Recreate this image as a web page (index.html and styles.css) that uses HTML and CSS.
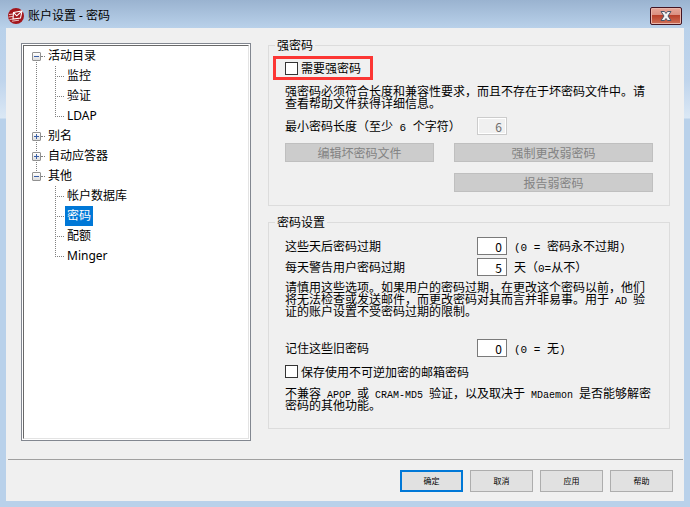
FILE: index.html
```html
<!DOCTYPE html>
<html lang="zh-CN">
<head>
    <meta charset="UTF-8">
    <meta name="viewport" content="width=device-width, initial-scale=1.0">
    <title>账户设置 - 密码</title>
    <link rel="stylesheet" href="styles.css">
</head>
<body>
    <header class="title-bar">
        <svg class="app-icon" width="16" height="16" viewBox="0 0 16 16">
            <circle cx="8" cy="8" r="8" fill="#a3161c"/>
            <path d="M5.5 4.5L14 3L12.5 10L5 11Z" fill="#a3161c" stroke="#fff" stroke-width="1.1"/>
            <path d="M5.5 4.5L8.8 7.8L14 3" fill="none" stroke="#fff" stroke-width="1.1"/>
            <path d="M1 6.5L5 6M0.5 9L5 8.4M1.5 11.5L5 11M4 13.2L11 12.2" fill="none" stroke="#f3d3d3" stroke-width="0.9"/>
        </svg>
        <h1 class="title">账户设置 - 密码</h1>
        <button class="close-btn" type="button" aria-label="关闭">
            <svg width="12" height="10" viewBox="0 0 12 10">
                <path d="M1 0.5H4.5L6 2.5L7.5 0.5H11L8 5L11 9.5H7.5L6 7.5L4.5 9.5H1L4 5Z" fill="#f4f4f4" stroke="#4b5568"/>
            </svg>
        </button>
    </header>

    <form class="window">
        <div class="main">
            <nav class="tree">
                <ul class="tree-list">
                    <li class="node">
                        <div class="row"><button class="toggle" type="button" aria-label="折叠"></button><a href="#">活动目录</a></div>
                        <ul class="children">
                            <li class="leaf"><a href="#">监控</a></li>
                            <li class="leaf"><a href="#">验证</a></li>
                            <li class="leaf"><a href="#">LDAP</a></li>
                        </ul>
                    </li>
                    <li class="node">
                        <div class="row"><button class="toggle closed" type="button" aria-label="展开"></button><a href="#">别名</a></div>
                    </li>
                    <li class="node">
                        <div class="row"><button class="toggle closed" type="button" aria-label="展开"></button><a href="#">自动应答器</a></div>
                    </li>
                    <li class="node">
                        <div class="row"><button class="toggle" type="button" aria-label="折叠"></button><a href="#">其他</a></div>
                        <ul class="children">
                            <li class="leaf"><a href="#">帐户数据库</a></li>
                            <li class="leaf"><a href="#" class="selected">密码</a></li>
                            <li class="leaf"><a href="#">配额</a></li>
                            <li class="leaf"><a href="#">Minger</a></li>
                        </ul>
                    </li>
                </ul>
            </nav>

            <div class="panel">
                <fieldset class="group">
                    <legend>强密码</legend>
                    <div class="group-body">
                        <label class="check highlight"><input type="checkbox">需要强密码</label>
                        <p class="note">强密码必须符合长度和兼容性要求，而且不存在于坏密码文件中。请查看帮助文件获得详细信息。</p>
                        <div class="field min-length">
                            <label for="min-length">最小密码长度（至少<span class="latin"> 6 </span>个字符）</label>
                            <input type="text" id="min-length" value="6" disabled>
                        </div>
                        <div class="actions">
                            <button type="button" disabled>编辑坏密码文件</button>
                            <button type="button" disabled>强制更改弱密码</button>
                            <button type="button" class="report" disabled>报告弱密码</button>
                        </div>
                    </div>
                </fieldset>

                <fieldset class="group">
                    <legend>密码设置</legend>
                    <div class="group-body settings">
                        <div class="field">
                            <label for="expire">这些天后密码过期</label>
                            <input type="text" id="expire" value="0">
                            <span><span class="latin">(0 = </span>密码永不过期<span class="latin">)</span></span>
                        </div>
                        <div class="field">
                            <label for="warn">每天警告用户密码过期</label>
                            <input type="text" id="warn" value="5">
                            <span>天（<span class="latin">0=</span>从不）</span>
                        </div>
                        <p class="note">请慎用这些选项。如果用户的密码过期，在更改这个密码以前，他们将无法检查或发送邮件，而更改密码对其而言并非易事。用于<span class="latin"> AD </span>验证的账户设置不受密码过期的限制。</p>
                        <div class="field remember">
                            <label for="remember">记住这些旧密码</label>
                            <input type="text" id="remember" value="0">
                            <span><span class="latin">(0 = </span>无<span class="latin">)</span></span>
                        </div>
                        <label class="check"><input type="checkbox">保存使用不可逆加密的邮箱密码</label>
                        <p class="note">不兼容<span class="latin"> APOP </span>或<span class="latin"> CRAM-MD5 </span>验证，以及取决于<span class="latin"> MDaemon </span>是否能够解密密码的其他功能。</p>
                    </div>
                </fieldset>
            </div>
        </div>

        <footer class="footer">
            <button type="button" class="btn primary">确定</button>
            <button type="button" class="btn">取消</button>
            <button type="button" class="btn">应用</button>
            <button type="button" class="btn">帮助</button>
        </footer>
    </form>
</body>
</html>
```
FILE: styles.css
```css
* {
    margin: 0;
    padding: 0;
    box-sizing: border-box;
}
body {
    min-height: 100vh;
    display: flex;
    flex-direction: column;
    padding: 0 6px 6px;
    background: linear-gradient(#9ab3d0 0, #b9d1ea 28px, #bfd4ec 80px, #dbe8f5 118px, #b9d1ea 119px);
    font-family: "Noto Sans CJK SC", sans-serif;
    font-size: 12px;
    line-height: 12px;
    color: #000;
}
button, input {
    font: inherit;
    color: inherit;
}
ul {
    list-style: none;
}

/* title bar */
.title-bar {
    height: 28px;
    display: flex;
    align-items: center;
    padding: 4px 2px 0;
}
.title {
    flex: 1;
    margin-left: 4px;
    font-family: "Noto Sans", "Noto Sans CJK SC", sans-serif;
    font-size: 12px;
    font-weight: 400;
    line-height: 16px;
}
.close-btn {
    width: 32px;
    height: 18px;
    display: flex;
    align-items: center;
    justify-content: center;
    border: 1px solid #431422;
    border-radius: 2px;
    background: linear-gradient(#e8a799 0, #d98e80 45%, #b8402a 46%, #cf7159 100%);
    box-shadow: inset 0 0 0 1px #e9b5aa;
}

/* window area */
.window {
    flex: 1;
    display: flex;
    flex-direction: column;
    background: #f0f0f0;
}
.main {
    flex: 1;
    display: flex;
    gap: 17px;
    padding: 10px 14px 18px 15px;
}

/* tree */
.tree {
    width: 230px;
    margin-top: 5px;
    padding: 1px;
    border: 1px solid #828790;
    background: #fff;
}
.tree-list {
    height: 100%;
    padding: 0 8px;
    border: 1px solid #e3e3e3;
    border-top-color: #696969;
    border-left-color: #696969;
}
.tree a {
    color: #000;
    text-decoration: none;
    font-family: "Noto Sans", "Noto Sans CJK SC", sans-serif;
    line-height: 20px;
}
.row {
    height: 20px;
    display: flex;
    align-items: center;
}
.row a {
    display: flex;
    align-items: center;
}
.row a::before {
    content: "";
    width: 4px;
    margin-right: 3px;
    border-top: 1px dotted #808080;
}
.node {
    background: repeating-linear-gradient(#808080 0 1px, #fff 1px 2px) 4px 0 / 1px 100% no-repeat;
}
.node:first-child {
    background-position: 4px 10px;
}
.node:last-child {
    background-size: 1px 10px;
}
.toggle {
    width: 9px;
    height: 9px;
    border: 1px solid #919191;
    border-radius: 1px;
    background:
        linear-gradient(#3b5fa5, #3b5fa5) center / 5px 1px no-repeat,
        linear-gradient(#fff, #dcdcdc);
}
.toggle.closed {
    background:
        linear-gradient(#3b5fa5, #3b5fa5) center / 5px 1px no-repeat,
        linear-gradient(#3b5fa5, #3b5fa5) center / 1px 5px no-repeat,
        linear-gradient(#fff, #dcdcdc);
}
.children {
    margin-left: 23px;
}
.leaf {
    height: 20px;
    display: flex;
    align-items: center;
    background: repeating-linear-gradient(#808080 0 1px, #fff 1px 2px) 0 0 / 1px 100% no-repeat;
}
.leaf:last-child {
    background-size: 1px 10px;
}
.leaf::before {
    content: "";
    width: 9px;
    border-top: 1px dotted #808080;
}
.leaf a {
    height: 20px;
    margin-left: 1px;
    padding: 0 2px;
}
.tree .selected {
    background: #0078d7;
    color: #fff;
}

/* groups */
.panel {
    flex: 1;
    display: flex;
    flex-direction: column;
    gap: 9px;
}
.group {
    min-width: 0;
    padding: 0 6px;
    border: 1px solid #dcdcdc;
}
.group legend {
    padding: 0 2px;
    line-height: 14px;
}
.group-body {
    padding: 4px 10px 13px;
}
.group-body.settings {
    padding: 8px 10px 17px;
}
.latin {
    font-family: "Liberation Mono", monospace;
    font-size: 10px;
    line-height: 0;
    white-space: pre-wrap;
}
.field .latin {
    font-size: 11px;
}
.check {
    display: flex;
    align-items: center;
    gap: 3px;
}
.check input {
    appearance: none;
    width: 13px;
    height: 13px;
    border: 1px solid #333;
    background: #fff;
}
.highlight {
    width: 100px;
    height: 24px;
    margin-left: -12px;
    padding-left: 9px;
    border: 3px solid #fc3634;
}
.note {
    margin: 5px 0 8px;
}
.field {
    display: grid;
    grid-template-columns: 192px 30px 1fr;
    align-items: center;
    margin-bottom: 3px;
}
.field input {
    width: 30px;
    height: 18px;
    padding: 0 4px;
    border: 1px solid #7a7a7a;
    background: #fff;
    text-align: right;
}
.field input:disabled {
    border-color: #ccc;
    background: #f0f0f0;
    box-shadow: inset 0 0 0 1px #fff;
    color: #6d6d6d;
}
.field > span {
    margin-left: 7px;
}
.min-length {
    margin-bottom: 8px;
}
.remember {
    margin: 22px 0 8px;
}
.settings .check + .note {
    margin: 9px 0 0;
}
.actions {
    display: grid;
    grid-template-columns: 3fr 4fr;
    gap: 11px 20px;
}
.actions button {
    height: 19px;
    border: 1px solid #bfbfbf;
    background: #ccc;
    color: #838383;
}
.actions .report {
    grid-column: 2;
}

/* bottom buttons */
.footer {
    display: flex;
    justify-content: flex-end;
    gap: 7px;
    margin: 0 1px 0 2px;
    padding: 10px 10px 9px;
    border-top: 1px solid #a0a0a0;
}
.btn {
    width: 63px;
    height: 22px;
    border: 1px solid #adadad;
    background: #e1e1e1;
    font-size: 8px;
}
.btn.primary {
    border: 2px solid #0078d7;
}
```
